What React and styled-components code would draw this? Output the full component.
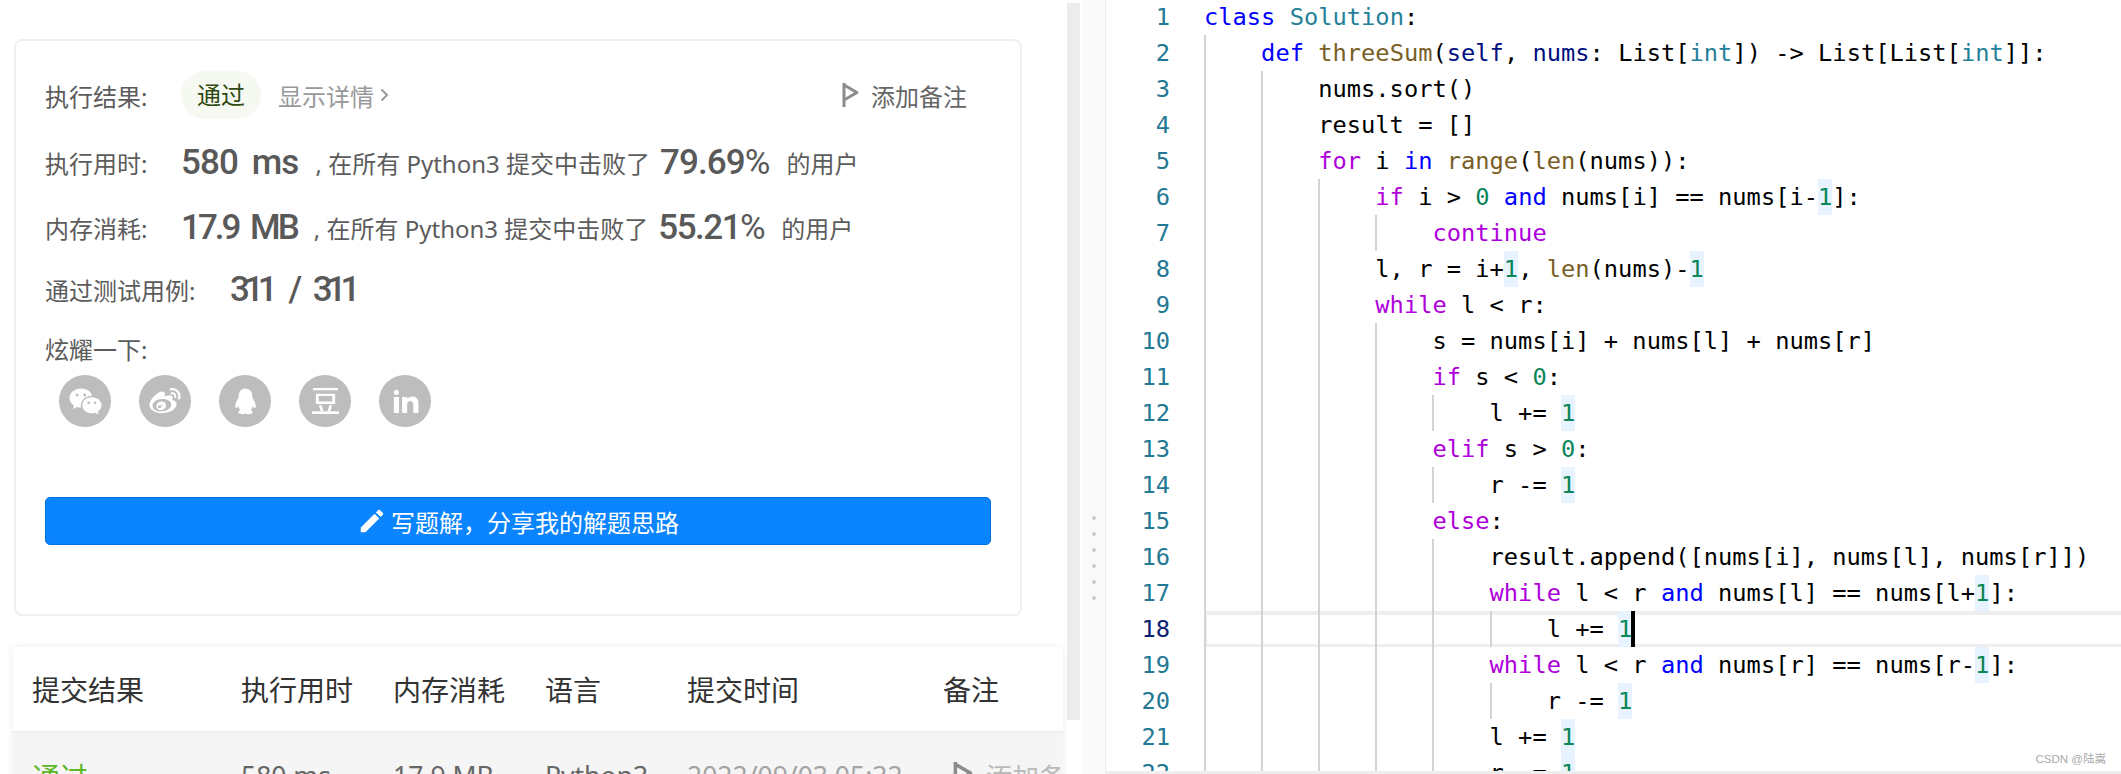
import React from 'react';
import styled, { createGlobalStyle } from 'styled-components';
import { RiWechatFill, RiWeiboFill, RiLinkedinFill } from 'react-icons/ri';
import { MdEdit } from 'react-icons/md';

const GlobalStyle = createGlobalStyle`
  html, body {
    margin: 0;
    padding: 0;
    background: #fff;
    overflow: hidden;
  }
  * {
    box-sizing: border-box;
  }
`;

const uiFont = `"Noto Sans", "Noto Sans CJK SC", sans-serif`;
const monoFont = `"DejaVu Sans Mono", "Noto Sans CJK SC", monospace`;

const Page = styled.div`
  display: flex;
  width: 2121px;
  height: 774px;
  overflow: hidden;
  font-family: ${uiFont};
`;

const LeftPane = styled.div`
  flex: 0 0 1067px;
  height: 774px;
  padding: 39px 0 0 14px;
  overflow: hidden;
`;

const Card = styled.div`
  width: 1008px;
  height: 577px;
  padding: 30px 29px 0;
  border: 2px solid #f0f0f0;
  border-radius: 8px;
  color: #5c5c5c;
  font-size: 24px;
`;

const InfoRow = styled.div`
  display: flex;
  align-items: center;
  height: 48px;
  margin-bottom: ${(p) => p.$after}px;
  white-space: nowrap;
`;

const Label = styled.span`
  flex: 0 0 ${(p) => p.$width}px;
`;

const PassPill = styled.span`
  width: 80px;
  height: 48px;
  margin-right: 17px;
  border-radius: 24px;
  background: #f6f9f1;
  color: #2e4a12;
  line-height: 48px;
  text-align: center;
`;

const DetailLink = styled.span`
  display: flex;
  align-items: center;
  gap: 6px;
  color: #999;
`;

const NoteLink = styled.span`
  display: flex;
  align-items: center;
  gap: 11px;
  margin-left: auto;
  padding-right: 24px;
  color: #666;
`;

const BigValue = styled.span`
  color: #595959;
  font-family: Roboto, sans-serif;
  font-size: 35px;
  font-weight: 500;
  letter-spacing: ${(p) => p.$spacing ?? -0.9}px;
  word-spacing: ${(p) => p.$words ?? 6}px;
  margin-right: ${(p) => p.$after}px;
`;

const Percent = styled(BigValue)`
  margin: 0 17px 0 ${(p) => p.$before}px;
`;

const PercentSign = styled.span`
  font-weight: 400;
`;

const Plain = styled.span`
  color: #5c5c5c;
`;

const ShareLabel = styled.div`
  height: 36px;
  margin-bottom: 7px;
  line-height: 36px;
`;

const ShareRow = styled.div`
  display: flex;
  gap: 28px;
  height: 52px;
  margin: 0 0 70px 14px;
`;

const ShareIcon = styled.span`
  display: flex;
  align-items: center;
  justify-content: center;
  width: 52px;
  height: 52px;
  border-radius: 50%;
  background: #bdbdbd;
  color: #fff;
`;

const WriteButton = styled.div`
  display: flex;
  align-items: center;
  justify-content: center;
  gap: 4px;
  height: 48px;
  border: 1px solid #0071de;
  border-radius: 5px;
  background: #0a84ff;
  color: #fff;
  font-size: 24px;
`;

const Table = styled.div`
  width: 1050px;
  margin: 31px 0 0 -1px;
  box-shadow: 0 0 8px rgba(0, 0, 0, 0.07);
  white-space: nowrap;
  overflow: hidden;
`;

const TableRow = styled.div`
  display: grid;
  grid-template-columns: 209px 152px 152px 142px 256px 1fr;
  align-items: center;
  height: ${(p) => (p.$head ? 86 : 85)}px;
  padding-left: 19px;
  background: ${(p) => (p.$head ? '#fff' : '#f5f5f5')};
  border-bottom: ${(p) => (p.$head ? '2px solid #eee' : 'none')};
  color: ${(p) => (p.$head ? '#333' : '#666')};
  font-size: ${(p) => (p.$head ? 28 : 26.5)}px;
`;

const PassText = styled.span`
  color: #5cb82a;
  font-size: 28px;
`;

const TimeText = styled.span`
  color: #a3a3a3;
`;

const RowNote = styled.span`
  display: flex;
  align-items: center;
  gap: 12px;
  padding-left: 10px;
  color: #bbb;
`;

const ScrollTrack = styled.div`
  flex: 0 0 15px;
  padding: 3px 2px 0 0;
`;

const ScrollThumb = styled.div`
  height: 717px;
  background: #ececec;
`;

const Splitter = styled.div`
  display: flex;
  flex-direction: column;
  gap: 12px;
  flex: 0 0 24px;
  padding: 516px 0 0 10px;
  background: #fafafa;
  border-right: 1px solid #eee;
`;

const SplitDot = styled.span`
  width: 4px;
  height: 4px;
  border-radius: 50%;
  background: #ccc;
`;

const Editor = styled.div`
  position: relative;
  flex: 1;
  height: 774px;
  border-bottom: 3px solid #eee;
  overflow: hidden;
  color: #000;
  font-family: ${monoFont};
  font-size: 23.72px;
  line-height: 36px;
`;

const Lines = styled.div`
  margin-top: -1px;
`;

const Line = styled.div`
  display: flex;
  height: 36px;
`;

const LineNo = styled.div`
  flex: 0 0 98px;
  padding-right: 34px;
  color: ${(p) => (p.$active ? '#0b216f' : '#237893')};
  text-align: right;
`;

const CodeCell = styled.div`
  display: flex;
  flex: 1;
  white-space: pre;
  box-shadow: ${(p) =>
    p.$active ? 'inset 3px 0 0 #eee, inset 0 4px 0 #eee, inset 0 -3px 0 #eee' : 'none'};
`;

const Guide = styled.span`
  flex: 0 0 57.12px;
  border-left: 2px solid #d3d3d3;
`;

const tokenColors = {
  kw: '#0000ff',
  ctl: '#af00db',
  cls: '#267f99',
  fn: '#795e26',
  par: '#001080',
  num: '#098658',
};

const Token = styled.span`
  color: ${(p) => tokenColors[p.$kind] || '#000'};
`;

const One = styled.span`
  display: inline-block;
  height: 36px;
  background: #e7f3fe;
  color: #098658;
`;

const Cursor = styled.span`
  display: inline-block;
  width: 4px;
  height: 36px;
  margin: 0 -4px 0 -1px;
  background: #000;
  vertical-align: top;
`;

const Watermark = styled.div`
  position: absolute;
  right: 15px;
  bottom: 2px;
  color: #aaa;
  font-family: "Liberation Sans", "Noto Sans CJK SC", sans-serif;
  font-size: 11.5px;
  line-height: 20px;
`;

// [indent level, tokens]; a plain string is default-coloured text, 'one' tokens get the bracket tint
const code = [
  [0, [['kw', 'class'], ' ', ['cls', 'Solution'], ':']],
  [1, [['kw', 'def'], ' ', ['fn', 'threeSum'], '(', ['par', 'self'], ', ', ['par', 'nums'], ': List[', ['cls', 'int'], ']) -> List[List[', ['cls', 'int'], ']]:']],
  [2, ['nums.sort()']],
  [2, ['result = []']],
  [2, [['ctl', 'for'], ' i ', ['kw', 'in'], ' ', ['fn', 'range'], '(', ['fn', 'len'], '(nums)):']],
  [3, [['ctl', 'if'], ' i > ', ['num', '0'], ' ', ['kw', 'and'], ' nums[i] == nums[i-', ['one', '1'], ']:']],
  [4, [['ctl', 'continue']]],
  [3, ['l, r = i+', ['one', '1'], ', ', ['fn', 'len'], '(nums)-', ['one', '1']]],
  [3, [['ctl', 'while'], ' l < r:']],
  [4, ['s = nums[i] + nums[l] + nums[r]']],
  [4, [['ctl', 'if'], ' s < ', ['num', '0'], ':']],
  [5, ['l += ', ['one', '1']]],
  [4, [['ctl', 'elif'], ' s > ', ['num', '0'], ':']],
  [5, ['r -= ', ['one', '1']]],
  [4, [['ctl', 'else'], ':']],
  [5, ['result.append([nums[i], nums[l], nums[r]])']],
  [5, [['ctl', 'while'], ' l < r ', ['kw', 'and'], ' nums[l] == nums[l+', ['one', '1'], ']:']],
  [6, ['l += ', ['one', '1'], ['cursor', '']]],
  [5, [['ctl', 'while'], ' l < r ', ['kw', 'and'], ' nums[r] == nums[r-', ['one', '1'], ']:']],
  [6, ['r -= ', ['one', '1']]],
  [5, ['l += ', ['one', '1']]],
  [5, ['r -= ', ['one', '1']]],
];

const renderToken = (t, i) => {
  if (typeof t === 'string') return <Token key={i}>{t}</Token>;
  const [kind, text] = t;
  if (kind === 'one') return <One key={i}>{text}</One>;
  if (kind === 'cursor') return <Cursor key={i} />;
  return <Token key={i} $kind={kind}>{text}</Token>;
};

const FlagIcon = ({ color, size = 24 }) => (
  <svg width={size * 0.75} height={size} viewBox="0 0 18 24" fill="none" stroke={color} strokeWidth="3">
    <path d="M2 0v24" />
    <path d="M2 2l13 7.5L2 17" strokeLinejoin="round" />
  </svg>
);

const Chevron = () => (
  <svg width="9" height="14" viewBox="0 0 9 14" fill="none" stroke="#999" strokeWidth="2">
    <path d="M1.5 1.5L7 7l-5.5 5.5" />
  </svg>
);

const DoubanIcon = () => (
  <svg width="27" height="26" viewBox="0 0 28 27" fill="#fff">
    <path d="M1 0h26v2.4H1z" />
    <path fillRule="evenodd" d="M4 6h20v10.5H4zM7 8.4v5.7h14V8.4z" />
    <path d="M7.2 18h2.8l1.8 6H9zM18 18h2.8L19 24h-2.8z" />
    <path d="M0 24.2h28V27H0z" />
  </svg>
);

const QqIcon = () => (
  <svg width="27" height="27" viewBox="0 0 28 27" fill="#fff">
    <path d="M14 0C9 0 7 4 7 8c0 1-.5 2-1 3-1.5 2.500-3 5.500-2.500 8.500.5 1.500 1.500 1 2.700-1 .6 1.500 1.300 3 2.300 4-2 .8-2.500 2-1.500 3 1.500 1.500 5 1.500 7 .5 2 1 5.500 1 7-.5 1-1 .5-2.200-1.500-3 1-1 1.700-2.500 2.300-4 1.200 2 2.200 2.500 2.700 1 .5-3-1-6-2.500-8.500-.5-1-1-2-1-3 0-4-2-8-7-8z" />
  </svg>
);

const StatRow = ({ label, value, pct, after, spacing, words, pctSpacing, pctBefore }) => (
  <InfoRow $after={after}>
    <Label $width={136}>{label}</Label>
    <BigValue $after={17} $spacing={spacing} $words={words}>{value}</BigValue>
    <Plain>, 在所有 Python3 提交中击败了</Plain>
    <Percent $before={pctBefore} $spacing={pctSpacing}>{pct}<PercentSign>%</PercentSign></Percent>
    <Plain>的用户</Plain>
  </InfoRow>
);

export default function App() {
  return (
    <Page>
      <GlobalStyle />
      <LeftPane>
        <Card>
          <InfoRow $after={19}>
            <Label $width={136}>执行结果:</Label>
            <PassPill>通过</PassPill>
            <DetailLink>显示详情 <Chevron /></DetailLink>
            <NoteLink><FlagIcon color="#8c8c8c" />添加备注</NoteLink>
          </InfoRow>
          <StatRow label="执行用时:" value="580 ms" pct="79.69" after={17} pctBefore={10} />
          <StatRow label="内存消耗:" value="17.9 MB" pct="55.21" after={14} spacing={-3} words={6} pctSpacing={-1.5} pctBefore={10} />
          <InfoRow $after={19}>
            <Label $width={185}>通过测试用例:</Label>
            <BigValue $after={0} $spacing={-6} $words={14}>311 / 311</BigValue>
          </InfoRow>
          <ShareLabel>炫耀一下:</ShareLabel>
          <ShareRow>
            <ShareIcon><RiWechatFill size={35} /></ShareIcon>
            <ShareIcon><RiWeiboFill size={34} /></ShareIcon>
            <ShareIcon><QqIcon /></ShareIcon>
            <ShareIcon><DoubanIcon /></ShareIcon>
            <ShareIcon><RiLinkedinFill size={31} /></ShareIcon>
          </ShareRow>
          <WriteButton><MdEdit size={30} />写题解，分享我的解题思路</WriteButton>
        </Card>
        <Table>
          <TableRow $head>
            <span>提交结果</span>
            <span>执行用时</span>
            <span>内存消耗</span>
            <span>语言</span>
            <span>提交时间</span>
            <span>备注</span>
          </TableRow>
          <TableRow>
            <PassText>通过</PassText>
            <span>580 ms</span>
            <span>17.9 MB</span>
            <span>Python3</span>
            <TimeText>2022/09/03 05:32</TimeText>
            <RowNote><FlagIcon color="#8c8c8c" size={28} />添加备注</RowNote>
          </TableRow>
        </Table>
      </LeftPane>
      <ScrollTrack>
        <ScrollThumb />
      </ScrollTrack>
      <Splitter>
        {[0, 1, 2, 3, 4, 5].map((i) => <SplitDot key={i} />)}
      </Splitter>
      <Editor>
        <Lines>
          {code.map(([indent, tokens], i) => (
            <Line key={i}>
              <LineNo $active={i === 17}>{i + 1}</LineNo>
              <CodeCell $active={i === 17}>
                {Array.from({ length: indent }, (_, g) => <Guide key={g} />)}
                <span>{tokens.map(renderToken)}</span>
              </CodeCell>
            </Line>
          ))}
        </Lines>
        <Watermark>CSDN @陆嵩</Watermark>
      </Editor>
    </Page>
  );
}
